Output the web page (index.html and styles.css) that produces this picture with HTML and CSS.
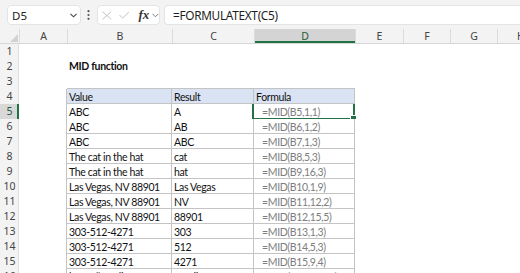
FILE: index.html
```html
<!DOCTYPE html>
<html>
<head>
<meta charset="utf-8">
<link rel="stylesheet" href="styles.css">
</head>
<body>
<div class="fbar">
  <div class="namebox"><span>D5</span>
    <svg class="chev" width="7" height="5" viewBox="0 0 7 5"><polyline points="0.5,0.8 3.5,3.8 6.5,0.8" fill="none" stroke="#444" stroke-width="1.1"/></svg>
  </div>
  <svg class="dots" width="3" height="10" viewBox="0 0 3 10"><circle cx="1.5" cy="1.2" r="1.1" fill="#555"/><circle cx="1.5" cy="5" r="1.1" fill="#555"/><circle cx="1.5" cy="8.8" r="1.1" fill="#555"/></svg>
  <div class="fxbox">
    <svg class="ic-x" width="10" height="9" viewBox="0 0 10 9"><path d="M0.5 0.5 L9.5 8.5 M9.5 0.5 L0.5 8.5" stroke="#c2c2c2" stroke-width="1" fill="none"/></svg>
    <svg class="ic-ok" width="11" height="8" viewBox="0 0 11 8"><polyline points="0.5,4 3.8,7.3 10.5,0.5" stroke="#c2c2c2" stroke-width="1" fill="none"/></svg>
    <span class="fx">fx</span>
    <svg class="chev2" width="7" height="5" viewBox="0 0 7 5"><polyline points="0.5,0.8 3.5,3.8 6.5,0.8" fill="none" stroke="#777" stroke-width="1"/></svg>
  </div>
  <div class="formula">=FORMULATEXT(C5)</div>
</div>

<div class="sheet">
  <div class="row hdr">
    <div class="corner"><svg width="8" height="8" viewBox="0 0 8 8"><polygon points="8,0 8,8 0,8" fill="#d2d2d2"/></svg></div>
    <div class="ch">A</div><div class="ch">B</div><div class="ch">C</div><div class="ch sel">D</div><div class="ch">E</div><div class="ch">F</div><div class="ch">G</div><div class="ch last">H</div>
  </div>

  <div class="row"><div class="rh">1</div><div class="c"></div><div class="c"></div><div class="c"></div><div class="c"></div><div class="c"></div><div class="c"></div><div class="c"></div><div class="c"></div></div>
  <div class="row"><div class="rh">2</div><div class="c"></div><div class="c title">MID function</div><div class="c"></div><div class="c"></div><div class="c"></div><div class="c"></div><div class="c"></div><div class="c"></div></div>
  <div class="row"><div class="rh">3</div><div class="c"></div><div class="c top"></div><div class="c top"></div><div class="c top"></div><div class="c"></div><div class="c"></div><div class="c"></div><div class="c"></div></div>

  <div class="row"><div class="rh">4</div><div class="c lb"></div><div class="c t th">Value</div><div class="c t th">Result</div><div class="c t th">Formula</div><div class="c"></div><div class="c"></div><div class="c"></div><div class="c"></div></div>
  <div class="row"><div class="rh rsel">5</div><div class="c lb"></div><div class="c t">ABC</div><div class="c t">A</div><div class="c t f active">=MID(B5,1,1)<span class="selbox"><span class="handle"></span></span></div><div class="c"></div><div class="c"></div><div class="c"></div><div class="c"></div></div>
  <div class="row"><div class="rh">6</div><div class="c lb"></div><div class="c t">ABC</div><div class="c t">AB</div><div class="c t f">=MID(B6,1,2)</div><div class="c"></div><div class="c"></div><div class="c"></div><div class="c"></div></div>
  <div class="row"><div class="rh">7</div><div class="c lb"></div><div class="c t">ABC</div><div class="c t">ABC</div><div class="c t f">=MID(B7,1,3)</div><div class="c"></div><div class="c"></div><div class="c"></div><div class="c"></div></div>
  <div class="row"><div class="rh">8</div><div class="c lb"></div><div class="c t">The cat in the hat</div><div class="c t">cat</div><div class="c t f">=MID(B8,5,3)</div><div class="c"></div><div class="c"></div><div class="c"></div><div class="c"></div></div>
  <div class="row"><div class="rh">9</div><div class="c lb"></div><div class="c t">The cat in the hat</div><div class="c t">hat</div><div class="c t f">=MID(B9,16,3)</div><div class="c"></div><div class="c"></div><div class="c"></div><div class="c"></div></div>
  <div class="row"><div class="rh">10</div><div class="c lb"></div><div class="c t">Las Vegas, NV 88901</div><div class="c t">Las Vegas</div><div class="c t f">=MID(B10,1,9)</div><div class="c"></div><div class="c"></div><div class="c"></div><div class="c"></div></div>
  <div class="row"><div class="rh">11</div><div class="c lb"></div><div class="c t">Las Vegas, NV 88901</div><div class="c t">NV</div><div class="c t f">=MID(B11,12,2)</div><div class="c"></div><div class="c"></div><div class="c"></div><div class="c"></div></div>
  <div class="row"><div class="rh">12</div><div class="c lb"></div><div class="c t">Las Vegas, NV 88901</div><div class="c t">88901</div><div class="c t f">=MID(B12,15,5)</div><div class="c"></div><div class="c"></div><div class="c"></div><div class="c"></div></div>
  <div class="row"><div class="rh">13</div><div class="c lb"></div><div class="c t">303-512-4271</div><div class="c t">303</div><div class="c t f">=MID(B13,1,3)</div><div class="c"></div><div class="c"></div><div class="c"></div><div class="c"></div></div>
  <div class="row"><div class="rh">14</div><div class="c lb"></div><div class="c t">303-512-4271</div><div class="c t">512</div><div class="c t f">=MID(B14,5,3)</div><div class="c"></div><div class="c"></div><div class="c"></div><div class="c"></div></div>
  <div class="row"><div class="rh">15</div><div class="c lb"></div><div class="c t">303-512-4271</div><div class="c t">4271</div><div class="c t f">=MID(B15,9,4)</div><div class="c"></div><div class="c"></div><div class="c"></div><div class="c"></div></div>
  <div class="row"><div class="rh">16</div><div class="c lb"></div><div class="c t">https://exceljet.net</div><div class="c t">exceljet.net</div><div class="c t f">=MID(B16,9,100)</div><div class="c"></div><div class="c"></div><div class="c"></div><div class="c"></div></div>
</div>
</body>
</html>
```

FILE: styles.css
```css
html, body {
  margin: 0;
  padding: 0;
  background: #ffffff;
  overflow: hidden;
}

/* formula bar */
.fbar {
  height: 29px;
  box-sizing: border-box;
  background: #f3f3f3;
  display: flex;
  align-items: flex-start;
  padding-top: 5px;
  font-family: "Noto Sans", "Open Sans", sans-serif;
}
.namebox {
  margin-left: 7px;
  width: 74px;
  height: 20px;
  box-sizing: border-box;
  background: #ffffff;
  border: 1px solid #e4e4e4;
  border-radius: 4px;
  display: flex;
  align-items: center;
  justify-content: space-between;
  padding: 0 3px 0 4px;
  font-size: 11.5px;
  color: #222;
}
.dots {
  margin-left: 6px;
  margin-top: 5px;
}
.fxbox {
  margin-left: 7px;
  width: 63px;
  height: 20px;
  box-sizing: border-box;
  background: #ffffff;
  border: 1px solid #e4e4e4;
  border-radius: 4px;
  display: flex;
  align-items: center;
  padding-left: 4px;
}
.ic-ok { margin-left: 7px; }
.fx {
  margin-left: 9px;
  font-family: "Liberation Serif", "DejaVu Serif", serif;
  font-style: italic;
  font-weight: bold;
  font-size: 13px;
  color: #333;
  line-height: 18px;
}
.chev2 { margin-left: 3px; }
.formula {
  margin-left: 4px;
  flex: 1;
  height: 20px;
  box-sizing: border-box;
  background: #ffffff;
  border: 1px solid #e4e4e4;
  border-right: none;
  border-radius: 4px 0 0 4px;
  padding-left: 8px;
  font-size: 11.8px;
  line-height: 18px;
  color: #1e1e1e;
  letter-spacing: -0.3px;
}

/* sheet */
.sheet {
  display: flex;
  flex-direction: column;
}
.row {
  display: grid;
  grid-template-columns: 19px 48px 105px 82px 101px 48px 47px 47px 47px;
  height: 15px;
  overflow: hidden;
}
.row.hdr {
  height: 14px;
  background: #f3f3f3;
  border-bottom: 1px solid #d6d6d6;
}
.corner {
  display: flex;
  align-items: flex-end;
  justify-content: flex-end;
  padding: 0 1px 1px 0;
}
.ch {
  font-family: "Noto Sans", "Open Sans", sans-serif;
  font-size: 10.5px;
  color: #444;
  text-align: center;
  line-height: 14px;
  border-left: 1px solid #dcdcdc;
}
.ch.sel {
  background: #d4d4d4;
  box-shadow: inset 0 -2px 0 #217346;
  color: #1e5c38;
}
.rh {
  font-family: "Noto Sans", "Open Sans", sans-serif;
  font-size: 10.5px;
  color: #444;
  text-align: center;
  line-height: 15px;
  background: #f3f3f3;
  box-shadow: inset -1px 0 0 #dedede;
}
.rh.rsel {
  background: #d8d8d8;
  color: #1e5c38;
  box-shadow: inset -2px 0 0 #217346;
}

.c {
  box-sizing: border-box;
  font-family: "Lato", "Open Sans", sans-serif;
  font-size: 10.5px;
  letter-spacing: -0.35px;
  line-height: 15px;
  color: #111;
  padding-left: 2px;
  white-space: nowrap;
  overflow: hidden;
}
.title {
  font-weight: bold;
  overflow: visible;
}
.top { border-bottom: 1px solid #c4c4c4; }
.lb { border-right: 1px solid #c4c4c4; }
.t {
  border-right: 1px solid #c4c4c4;
  border-bottom: 1px solid #c4c4c4;
  line-height: 14px;
  padding-top: 1px;
}
.th { background: #dae3f3; }
.f {
  color: #7d7d7d;
  padding-left: 8px;
}
.active {
  position: relative;
  overflow: visible;
}
.selbox {
  position: absolute;
  left: -2px;
  top: -2px;
  right: -1px;
  bottom: -1px;
  border: 2px solid #217346;
}
.handle {
  position: absolute;
  right: -4px;
  bottom: -4px;
  width: 5px;
  height: 5px;
  background: #217346;
  border: 1px solid #ffffff;
}
```
